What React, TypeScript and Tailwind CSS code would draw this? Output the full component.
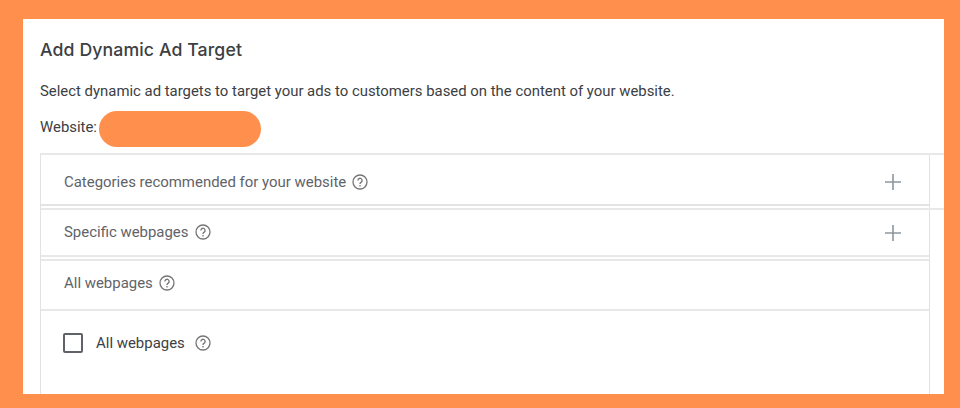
function HelpIcon({ className }: { className?: string }) {
  return (
    <svg viewBox="0 0 16 16" className={`w-4 h-4 shrink-0 ${className ?? ''}`} fill="none" stroke="#757575">
      <circle cx="8" cy="8" r="7" strokeWidth="1.3" />
      <path d="M5.9 6.4a2.1 2.1 0 1 1 3.3 1.7c-.8.5-1.2.9-1.2 1.8" strokeWidth="1.3" />
      <path d="M8 11.1v1.3" strokeWidth="1.3" />
    </svg>
  );
}

function PlusIcon() {
  return (
    <svg viewBox="0 0 16 16" className="w-4 h-4 shrink-0" stroke="#8d979e" strokeWidth="1.6" fill="none">
      <path d="M0 8h16M8 0v16" />
    </svg>
  );
}

function SectionRow({ label, height, expandable }: { label: string; height: string; expandable?: boolean }) {
  return (
    <div className={`flex items-center justify-between pl-[23px] pr-7 ${height}`}>
      <div className="flex items-center gap-[6px]">
        <span className="text-[14.95px] text-[#5f6368]">{label}</span>
        <HelpIcon />
      </div>
      {expandable && <PlusIcon />}
    </div>
  );
}

export default function App() {
  return (
    <div className="w-[960px] h-[408px] overflow-hidden bg-[#ff8f4d] pt-[19px] pl-[23px] font-['Roboto',sans-serif]">
      <div className="w-[921px] h-[375px] bg-white pt-[20px] pl-[17px] overflow-hidden">
        <h1 className="h-[22px] leading-[22px] text-[17.7px] font-medium text-[#3c4043] font-['Inter',sans-serif] tracking-[0.1px]">
          Add Dynamic Ad Target
        </h1>
        <p className="mt-[20px] h-[20px] leading-[20px] text-[14.9px] text-[#3c4043]">
          Select dynamic ad targets to target your ads to customers based on the content of your website.
        </p>
        <div className="mt-[10px] h-[36px] flex items-center gap-[2px] text-[14.9px] text-[#3c4043]">
          <span className="pb-[4px]">Website:</span>
          <div className="w-[162px] h-[36px] rounded-[18px] bg-[#ff8f4d]" />
        </div>

        {/* Sections */}
        <div className="mt-[6px] h-[241px] border-t-2 border-[#e8e8e8]">
          <div className="w-[890px] h-full border-x border-[#e2e2e2]">
            <div className="border-b-2 border-[#e3e3e3] pt-[5px]">
              <SectionRow label="Categories recommended for your website" height="h-[44px]" expandable />
            </div>
            <div className="mt-[2px] border-t-2 border-[#e8e8e8] w-[904px]" />
            <div className="border-b-2 border-[#e8e8e8]">
              <SectionRow label="Specific webpages" height="h-[45px]" expandable />
            </div>
            <div className="mt-[2px] border-t-2 border-[#e8e8e8]" />
            <div className="border-b-2 border-[#e8e8e8] pb-[4px]">
              <SectionRow label="All webpages" height="h-[44px]" />
            </div>
            <div className="flex items-center h-[64px] pl-[22px]">
              <div className="w-[20px] h-[20px] rounded-[2px] border-2 border-[#5f6368]" />
              <span className="ml-[13px] text-[14.95px] text-[#3c4043]">All webpages</span>
              <HelpIcon className="ml-[10px]" />
            </div>
          </div>
        </div>
      </div>
    </div>
  );
}
